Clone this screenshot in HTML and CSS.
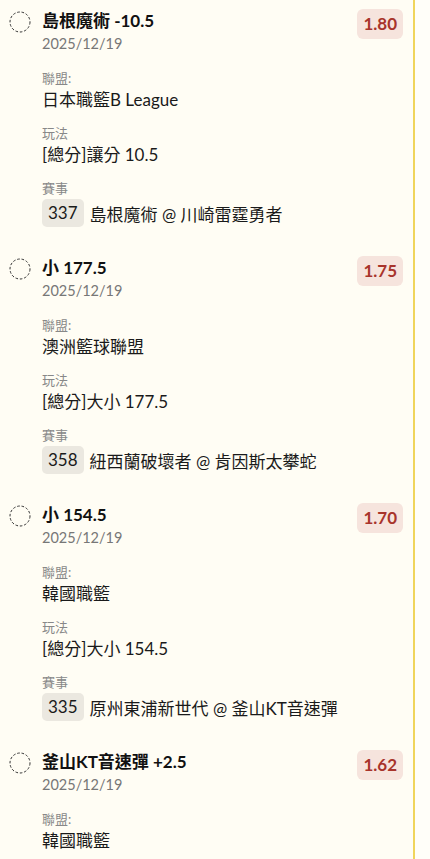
FILE: index.html
```html
<!DOCTYPE html>
<html lang="zh-Hant">
<head>
  <meta charset="UTF-8">
  <meta name="viewport" content="width=device-width, initial-scale=1.0">
  <title>投注單</title>
  <link rel="stylesheet" href="styles.css">
</head>
<body>
  <div class="list">

    <div class="card">
      <svg class="pick" width="22" height="22" viewBox="0 0 22 22"><circle cx="11" cy="11" r="10" fill="none" stroke="#333" stroke-width="1" stroke-dasharray="2.6 1.8"/></svg>
      <div class="info">
        <div class="title">島根魔術 -10.5</div>
        <div class="date">2025/12/19</div>
        <div class="field">
          <div class="label">聯盟:</div>
          <div class="value">日本職籃B League</div>
        </div>
        <div class="field">
          <div class="label">玩法</div>
          <div class="value">[總分]讓分 10.5</div>
        </div>
        <div class="field">
          <div class="label">賽事</div>
          <div class="match"><span class="num">337</span><span>島根魔術 @ 川崎雷霆勇者</span></div>
        </div>
      </div>
      <div class="odds">1.80</div>
    </div>

    <div class="card">
      <svg class="pick" width="22" height="22" viewBox="0 0 22 22"><circle cx="11" cy="11" r="10" fill="none" stroke="#333" stroke-width="1" stroke-dasharray="2.6 1.8"/></svg>
      <div class="info">
        <div class="title">小 177.5</div>
        <div class="date">2025/12/19</div>
        <div class="field">
          <div class="label">聯盟:</div>
          <div class="value">澳洲籃球聯盟</div>
        </div>
        <div class="field">
          <div class="label">玩法</div>
          <div class="value">[總分]大小 177.5</div>
        </div>
        <div class="field">
          <div class="label">賽事</div>
          <div class="match"><span class="num">358</span><span>紐西蘭破壞者 @ 肯因斯太攀蛇</span></div>
        </div>
      </div>
      <div class="odds">1.75</div>
    </div>

    <div class="card">
      <svg class="pick" width="22" height="22" viewBox="0 0 22 22"><circle cx="11" cy="11" r="10" fill="none" stroke="#333" stroke-width="1" stroke-dasharray="2.6 1.8"/></svg>
      <div class="info">
        <div class="title">小 154.5</div>
        <div class="date">2025/12/19</div>
        <div class="field">
          <div class="label">聯盟:</div>
          <div class="value">韓國職籃</div>
        </div>
        <div class="field">
          <div class="label">玩法</div>
          <div class="value">[總分]大小 154.5</div>
        </div>
        <div class="field">
          <div class="label">賽事</div>
          <div class="match"><span class="num">335</span><span>原州東浦新世代 @ 釜山KT音速彈</span></div>
        </div>
      </div>
      <div class="odds">1.70</div>
    </div>

    <div class="card">
      <svg class="pick" width="22" height="22" viewBox="0 0 22 22"><circle cx="11" cy="11" r="10" fill="none" stroke="#333" stroke-width="1" stroke-dasharray="2.6 1.8"/></svg>
      <div class="info">
        <div class="title">釜山KT音速彈 +2.5</div>
        <div class="date">2025/12/19</div>
        <div class="field">
          <div class="label">聯盟:</div>
          <div class="value">韓國職籃</div>
        </div>
      </div>
      <div class="odds">1.62</div>
    </div>

  </div>
</body>
</html>
```

FILE: styles.css
```css
html, body {
  margin: 0;
  padding: 0;
  background: #fffef9;
  height: 859px;
  overflow: hidden;
}

body {
  font-family: Lato, "Noto Sans CJK TC", sans-serif;
  color: #1a1a1a;
}

.list {
  width: 413px;
  min-height: 859px;
  background: #fffdf4;
  border-right: 2px solid #f0d55c;
}

.card {
  display: flex;
  align-items: flex-start;
  padding: 10px 10px 20px 9px;
}

.pick {
  flex: none;
  margin-top: 1px;
}

.info {
  flex: 1;
  margin-left: 11px;
}

.title {
  font-size: 17px;
  font-weight: bold;
  line-height: 22px;
  color: #111;
}

.date {
  margin-top: 2px;
  font-size: 14.5px;
  line-height: 20px;
  color: #777;
}

.field {
  margin-top: 13px;
}

.date + .field {
  margin-top: 15px;
}

.label {
  font-size: 13px;
  line-height: 18px;
  color: #888;
}

.value {
  margin-top: 2px;
  font-size: 17px;
  line-height: 22px;
  color: #1a1a1a;
}

.match {
  display: flex;
  align-items: center;
  gap: 6px;
  margin-top: 2px;
  font-size: 17px;
}

.num {
  display: inline-block;
  height: 28px;
  line-height: 28px;
  padding: 0 6px;
  background: #ebe8e0;
  border-radius: 5px;
  font-size: 17px;
}

.odds {
  flex: none;
  margin-top: -1px;
  height: 30px;
  line-height: 30px;
  padding: 0 6px;
  background: #f6e4dd;
  border-radius: 6px;
  color: #a8342b;
  font-size: 17px;
  font-weight: bold;
}
```
